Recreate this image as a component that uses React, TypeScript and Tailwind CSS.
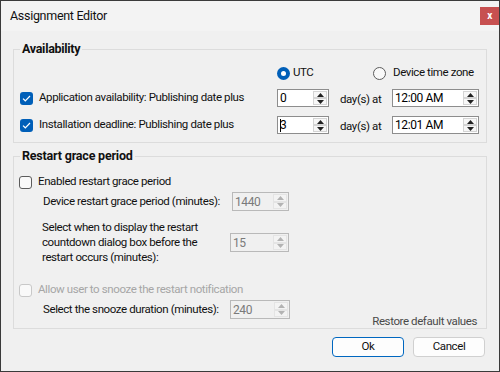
import React from "react";

function Arrow({ up, disabled }: { up?: boolean; disabled?: boolean }) {
  return (
    <div
      className={`flex flex-1 items-center justify-center border ${
        disabled ? "border-[#e4e4e4] bg-[#f3f3f3]" : "border-[#d4d4d4] bg-[#f7f7f7]"
      }`}
    >
      <svg width="7" height="4" viewBox="0 0 7 4">
        <path
          d={up ? "M3.5 0L7 4H0z" : "M0 0H7L3.5 4z"}
          fill={disabled ? "#b3b3b3" : "#222"}
        />
      </svg>
    </div>
  );
}

function SpinBox({
  value,
  className,
  disabled,
  caret,
}: {
  value: string;
  className: string;
  disabled?: boolean;
  caret?: boolean;
}) {
  return (
    <div
      className={`flex items-stretch border ${
        disabled
          ? "border-[#b9b9b9] bg-[#f0f0f0] text-[#7a7a7a]"
          : "border-[#8d8d8d] bg-white text-black"
      } ${className}`}
    >
      <div className="flex flex-1 items-center pl-[2px] text-[12px] leading-none">
        {caret && <span className="mr-[-1px] h-[13px] w-px bg-black" />}
        {value}
      </div>
      <div className="flex w-[15px] flex-col py-px pr-px">
        <Arrow up disabled={disabled} />
        <Arrow disabled={disabled} />
      </div>
    </div>
  );
}

function Check({ checked, disabled }: { checked?: boolean; disabled?: boolean }) {
  if (checked) {
    return (
      <span className="flex h-[13px] w-[13px] shrink-0 items-center justify-center rounded-[3px] bg-[#005fb8]">
        <svg width="9" height="7" viewBox="0 0 9 7">
          <path d="M1 3.6L3.3 5.8L8 1" stroke="white" strokeWidth="1.2" fill="none" />
        </svg>
      </span>
    );
  }
  return (
    <span
      className={`h-[13px] w-[13px] shrink-0 rounded-[3px] border bg-[#f9f9f9] ${
        disabled ? "border-[#c8c8c8]" : "border-[#5c5c5c]"
      }`}
    />
  );
}

function Radio({ checked }: { checked?: boolean }) {
  if (checked) {
    return (
      <span className="flex h-[13px] w-[13px] shrink-0 items-center justify-center rounded-full bg-[#005fb8]">
        <span className="h-[5px] w-[5px] rounded-full bg-white" />
      </span>
    );
  }
  return <span className="h-[13px] w-[13px] shrink-0 rounded-full border border-[#5c5c5c] bg-[#f9f9f9]" />;
}

export default function App() {
  return (
    <div className="flex h-[372px] w-[500px] flex-col border border-[#3a3a3a] bg-[#f0f0f0] font-['Roboto','Liberation_Sans',sans-serif] text-[11.5px] tracking-[-0.4px] text-[#111]">
      <div className="flex h-[30px] items-center justify-between bg-[#f3f3f3] pl-[9px]">
        <span className="text-[12.5px] tracking-[-0.3px]">Assignment Editor</span>
        <div className="flex h-[18px] w-[19px] items-center justify-center bg-[#c75050] text-[10px] font-bold leading-none text-white">
          x
        </div>
      </div>

      <div className="flex flex-1 flex-col px-[12px]">
        <fieldset className="mt-[10px] border border-[#dcdcdc] pb-[8px] pl-[6px]">
          <legend className="px-[2px] text-[12.5px] font-bold leading-[16px] tracking-[-0.3px]">Availability</legend>

          <div className="mt-[7px] flex h-[18px] items-center">
            <div className="w-[257px]" />
            <div className="flex w-[96px] items-center gap-[3px]">
              <Radio checked />
              <span>UTC</span>
            </div>
            <div className="flex items-center gap-[7px]">
              <Radio />
              <span>Device time zone</span>
            </div>
          </div>

          <div className="mt-[7px] flex h-[18px] items-center">
            <div className="flex w-[257px] items-center gap-[6px]">
              <Check checked />
              <span>Application availability: Publishing date plus</span>
            </div>
            <SpinBox value="0" className="h-[18px] w-[52px]" />
            <span className="ml-[11px] w-[52px] pt-[4px]">day(s) at</span>
            <SpinBox value="12:00 AM" className="h-[18px] w-[87px]" />
          </div>

          <div className="mt-[9px] flex h-[18px] items-center">
            <div className="flex w-[257px] items-center gap-[6px]">
              <Check checked />
              <span>Installation deadline: Publishing date plus</span>
            </div>
            <SpinBox value="3" caret className="h-[18px] w-[52px]" />
            <span className="ml-[11px] w-[52px] pt-[4px]">day(s) at</span>
            <SpinBox value="12:01 AM" className="h-[18px] w-[87px]" />
          </div>
        </fieldset>

        <fieldset className="mt-[5px] border border-[#dcdcdc] pl-[5px]">
          <legend className="ml-px px-[2px] text-[12.5px] font-bold leading-[16px] tracking-[-0.2px]">Restart grace period</legend>

          <div className="mt-[9px] flex h-[18px] items-center gap-[6px]">
            <Check />
            <span>Enabled restart grace period</span>
          </div>

          <div className="mt-px flex h-[19px] items-center pl-[24px]">
            <span className="w-[189px]">Device restart grace period (minutes):</span>
            <SpinBox value="1440" disabled className="h-[19px] w-[57px]" />
          </div>

          <div className="mt-[9px] flex items-center pl-[23px]">
            <span className="w-[188px] leading-[15px]">
              Select when to display the restart
              <br />
              countdown dialog box before the
              <br />
              restart occurs (minutes):
            </span>
            <SpinBox value="15" disabled className="h-[19px] w-[59px]" />
          </div>

          <div className="mt-[16px] flex h-[18px] items-center gap-[6px] text-[#a6a6a6]">
            <Check disabled />
            <span>Allow user to snooze the restart notification</span>
          </div>

          <div className="mt-px flex h-[19px] items-center pl-[24px]">
            <span className="w-[187px]">Select the snooze duration (minutes):</span>
            <SpinBox value="240" disabled className="h-[19px] w-[60px]" />
          </div>

          <div className="mt-[-5px] h-[14px] pr-[9px] text-right leading-[14px] text-[#4a4a4a]">
            Restore default values
          </div>
        </fieldset>

        <div className="mt-[8px] flex justify-end gap-[9px] pr-[2px]">
          <button className="h-[20px] w-[72px] rounded-[4px] border border-[#0067c0] bg-[#fdfdfd] leading-none">
            Ok
          </button>
          <button className="h-[20px] w-[72px] rounded-[4px] border border-[#d0d0d0] bg-[#fdfdfd] leading-none">
            Cancel
          </button>
        </div>
      </div>
    </div>
  );
}
